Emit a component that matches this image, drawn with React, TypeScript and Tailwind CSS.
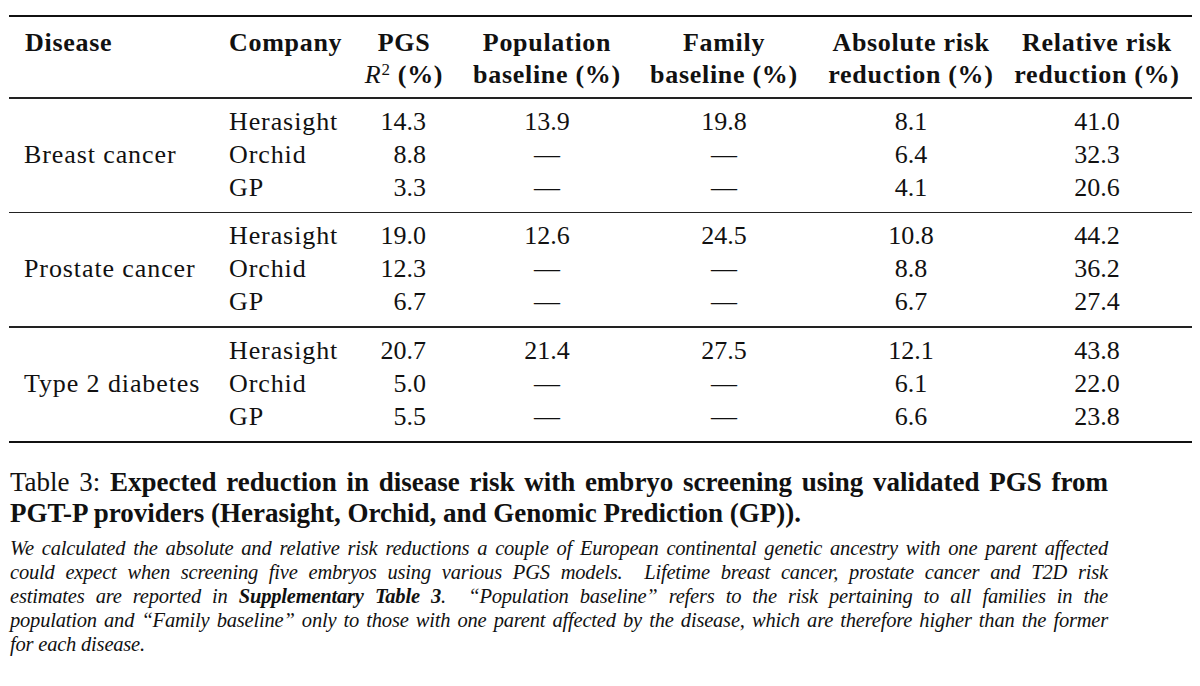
import React from "react";

type Row = [string, string, string, string, string, string];

const sections: { disease: string; rows: Row[] }[] = [
  {
    disease: "Breast cancer",
    rows: [
      ["Herasight", "14.3", "13.9", "19.8", "8.1", "41.0"],
      ["Orchid", "8.8", "—", "—", "6.4", "32.3"],
      ["GP", "3.3", "—", "—", "4.1", "20.6"],
    ],
  },
  {
    disease: "Prostate cancer",
    rows: [
      ["Herasight", "19.0", "12.6", "24.5", "10.8", "44.2"],
      ["Orchid", "12.3", "—", "—", "8.8", "36.2"],
      ["GP", "6.7", "—", "—", "6.7", "27.4"],
    ],
  },
  {
    disease: "Type 2 diabetes",
    rows: [
      ["Herasight", "20.7", "21.4", "27.5", "12.1", "43.8"],
      ["Orchid", "5.0", "—", "—", "6.1", "22.0"],
      ["GP", "5.5", "—", "—", "6.6", "23.8"],
    ],
  },
];

const cols = "grid grid-cols-[208px_134px_106px_180px_174px_200px_172px]";

function Section({ disease, rows }: { disease: string; rows: Row[] }) {
  return (
    <div className={`${cols} pt-[6px] pb-[8px] text-[26px] leading-[33px]`}>
      <div className="row-span-3 flex items-center pl-[15px] tracking-[0.9px]">{disease}</div>
      {rows.map((r, i) => (
        <React.Fragment key={i}>
          <div className="pl-[12px] tracking-[0.9px]">{r[0]}</div>
          <div className="text-right pr-[31px]">{r[1]}</div>
          <div className="text-center">{r[2]}</div>
          <div className="text-center">{r[3]}</div>
          <div className="text-center">{r[4]}</div>
          <div className="text-center">{r[5]}</div>
        </React.Fragment>
      ))}
    </div>
  );
}

export default function App() {
  return (
    <div className="w-[1200px] h-[686px] bg-white text-[#111] font-['Liberation_Serif',serif] overflow-hidden">
      <div className="ml-[9px] w-[1183px] pt-[15px]">
        <div className="h-[2px] bg-[#111]" />
        <div className={`${cols} pt-[10px] pb-[6px] text-[26px] leading-[32px] font-bold tracking-[0.7px]`}>
          <div className="pl-[16px]">Disease</div>
          <div className="pl-[12px]">Company</div>
          <div className="text-center">
            <div>PGS</div>
            <div>
              <i className="font-normal">R</i>
              <sup className="font-normal text-[17px]">2</sup> (%)
            </div>
          </div>
          <div className="text-center">
            <div>Population</div>
            <div>baseline (%)</div>
          </div>
          <div className="text-center">
            <div>Family</div>
            <div>baseline (%)</div>
          </div>
          <div className="text-center">
            <div>Absolute risk</div>
            <div>reduction (%)</div>
          </div>
          <div className="text-center">
            <div>Relative risk</div>
            <div>reduction (%)</div>
          </div>
        </div>
        <div className="h-[1.5px] bg-[#222]" />
        {sections.map((s, i) => (
          <React.Fragment key={s.disease}>
            <Section disease={s.disease} rows={s.rows} />
            <div className={i === sections.length - 1 ? "h-[2px] bg-[#111]" : "h-[1.5px] bg-[#222]"} />
          </React.Fragment>
        ))}
      </div>

      <div className="ml-[10px] w-[1098px] mt-[24px]">
        <div className="text-[27px] leading-[31px]">
          <div className="text-justify [text-align-last:justify]">
            Table 3: <b>Expected reduction in disease risk with embryo screening using validated PGS from</b>
          </div>
          <div>
            <b>PGT-P providers (Herasight, Orchid, and Genomic Prediction (GP)).</b>
          </div>
        </div>
        <div className="mt-[7px] italic text-[20.5px] leading-[24px] tracking-[-0.2px]">
          <div className="text-justify [text-align-last:justify] whitespace-nowrap">
            We calculated the absolute and relative risk reductions a couple of European continental genetic ancestry with one parent affected
          </div>
          <div className="text-justify [text-align-last:justify]">
            could expect when screening five embryos using various PGS models.&nbsp; Lifetime breast cancer, prostate cancer and T2D risk
          </div>
          <div className="text-justify [text-align-last:justify]">
            estimates are reported in <b>Supplementary Table 3</b>.&nbsp; “Population baseline” refers to the risk pertaining to all families in the
          </div>
          <div className="text-justify [text-align-last:justify]">
            population and “Family baseline” only to those with one parent affected by the disease, which are therefore higher than the former
          </div>
          <div>for each disease.</div>
        </div>
      </div>
    </div>
  );
}
